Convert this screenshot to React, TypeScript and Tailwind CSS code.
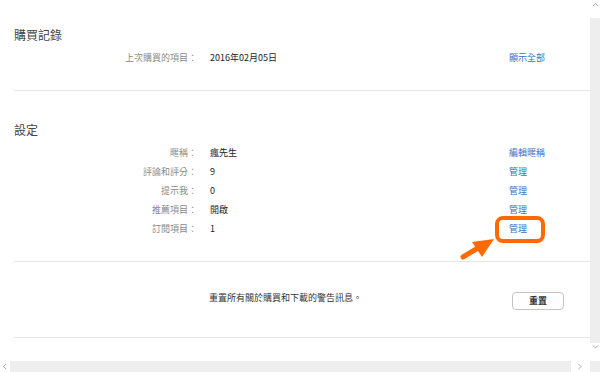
import React from "react";

const font = { fontFamily: '"Noto Sans CJK TC", "Noto Sans", "Liberation Sans", sans-serif' };

function Row({ label, value, link }: { label: string; value: string; link?: string }) {
  return (
    <div className="flex h-[19px] items-center text-[9px] leading-[19px]">
      <div className="w-[183px] text-right text-[#8a8a8a]">{label}</div>
      <div className="ml-[13px] w-[299px] text-[#222]">{value}</div>
      <div className="text-[#3a70c6]">{link}</div>
    </div>
  );
}

function Chevron({ dir }: { dir: "up" | "down" | "left" | "right" }) {
  const pts =
    dir === "up" ? "1,4 3.5,1.5 6,4" : dir === "down" ? "1,1.5 3.5,4 6,1.5" : dir === "left" ? "4,1 1.5,3.5 4,6" : "1.5,1 4,3.5 1.5,6";
  return (
    <svg width="7" height="7" viewBox="0 0 7 7">
      <polyline points={pts} fill="none" stroke="#a8a8a8" strokeWidth="1" />
    </svg>
  );
}

export default function App() {
  return (
    <div className="relative flex h-[372px] w-[600px] flex-col overflow-hidden bg-white" style={font}>
      <div className="flex h-[361px]">
        <div className="w-[590px] pl-[14px]">
          <section className="border-b border-[#e6e6e6] pt-[28px] pb-[23px]">
            <h2 className="text-[12px] leading-[14px] text-[#444]">購買記錄</h2>
            <div className="mt-[6px]">
              <Row label="上次購買的項目：" value="2016年02月05日" link="顯示全部" />
            </div>
          </section>
          <section className="border-b border-[#e6e6e6] pt-[32px] pb-[23px]">
            <h2 className="text-[12px] leading-[14px] text-[#444]">設定</h2>
            <div className="mt-[6px] flex flex-col">
              <Row label="暱稱：" value="瘋先生" link="編輯暱稱" />
              <Row label="評論和評分：" value="9" link="管理" />
              <Row label="提示我：" value="0" link="管理" />
              <Row label="推薦項目：" value="開啟" link="管理" />
              <Row label="訂閱項目：" value="1" link="管理" />
            </div>
          </section>
          <section className="flex h-[76px] items-start border-b border-[#e6e6e6] pt-[29px]">
            <div className="ml-[195px] w-[301px] text-[9px] leading-[14px] text-[#333]">
              重置所有關於購買和下載的警告訊息。
            </div>
            <button className="mt-[1px] ml-[2px] flex h-[18px] w-[52px] items-center justify-center rounded-[4px] border border-[#c4c4c4] bg-white text-[9px] font-bold text-[#333]">
              重置
            </button>
          </section>
        </div>
        <div className="flex w-[10px] flex-col">
          <div className="flex h-[18px] items-start justify-center pt-[2px]">
            <Chevron dir="up" />
          </div>
          <div className="h-[325px] bg-[#eeeeee]" />
          <div className="flex flex-1 items-start justify-center pt-[1px]">
            <Chevron dir="down" />
          </div>
        </div>
      </div>
      <div className="flex h-[11px]">
        <div className="flex w-[10px] items-center justify-center">
          <Chevron dir="left" />
        </div>
        <div className="w-[561px] bg-[#eeeeee]" />
        <div className="flex w-[19px] items-center justify-center">
          <Chevron dir="right" />
        </div>
        <div className="w-[10px] bg-[#eeeeee]" />
      </div>

      <div className="absolute left-[495px] top-[216px] h-[27px] w-[50px] rounded-[8px] border-[4px] border-[#ff6a00]" />
      <svg className="absolute left-[458px] top-[232px]" width="42" height="30" viewBox="0 0 42 30">
        <line x1="5" y1="25" x2="20" y2="16" stroke="#ff6a00" strokeWidth="5" strokeLinecap="round" />
        <polygon points="14,10 24,25 36,7" fill="#ff6a00" />
      </svg>
    </div>
  );
}
